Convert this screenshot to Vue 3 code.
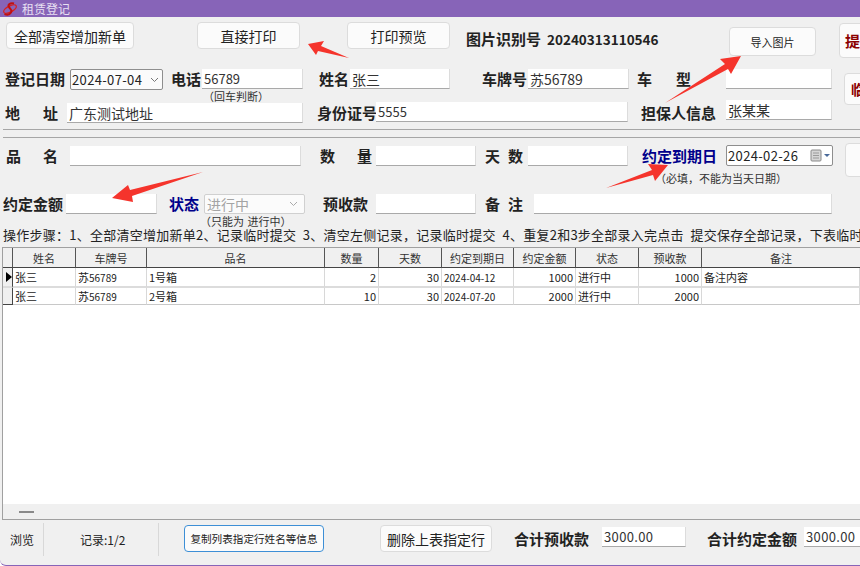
<template>
  <div class="win">
    <div class="title-bar">
      <svg class="logo" width="16" height="14" viewBox="0 0 16 14">
        <ellipse cx="8" cy="7" rx="7" ry="3" transform="rotate(-28 8 7)" fill="none" stroke="#d8201f" stroke-width="1.3" />
        <path d="M12 1.5C8 .5 5.500 2.500 7 5s3.500 3 2 5.500S5 13 2.500 12" fill="none" stroke="#c01010" stroke-width="2" />
      </svg>
      <span>租赁登记</span>
    </div>

    <div class="toolbar">
      <button class="btn btn-new">全部清空增加新单</button>
      <button class="btn btn-print">直接打印</button>
      <button class="btn btn-preview">打印预览</button>
      <span class="lb pic-lb">图片识别号</span>
      <span class="pic-no">20240313110546</span>
      <button class="btn btn-import">导入图片</button>
      <button class="btn btn-submit">提</button>
    </div>

    <div class="row row-a">
      <span class="lb">登记日期</span>
      <div class="combo">
        <span class="digits">2024-07-04</span>
        <svg width="9" height="6" viewBox="0 0 9 6"><path d="M1 1l3.500 3.500L8 1" fill="none" stroke="#777" /></svg>
      </div>
      <i></i>
      <span class="lb">电话</span>
      <input class="ipt small" value="56789" />
      <i></i>
      <span class="lb">姓名</span>
      <input class="ipt" value="张三" />
      <i></i>
      <span class="lb">车牌号</span>
      <input class="ipt" value="苏56789" />
      <i></i>
      <span class="lb spread sp-car">车 型</span>
      <input class="ipt" />
      <i></i>
      <button class="btn btn-temp">临</button>
    </div>
    <div class="note note-a">（回车判断）</div>

    <div class="row row-b">
      <span class="lb spread sp-addr">地 址</span>
      <input class="ipt" value="广东测试地址" />
      <i></i>
      <span class="lb">身份证号</span>
      <input class="ipt small up1" value="5555" />
      <i></i>
      <span class="lb">担保人信息</span>
      <input class="ipt up3" value="张某某" />
    </div>

    <div class="rule rule-a"></div>
    <div class="rule rule-b"></div>

    <div class="row row-c">
      <span class="lb spread sp-name">品 名</span>
      <input class="ipt" />
      <i></i>
      <span class="lb spread sp-qty">数 量</span>
      <input class="ipt" />
      <i></i>
      <span class="lb spread sp-day">天 数</span>
      <input class="ipt" />
      <i></i>
      <span class="lb navy">约定到期日</span>
      <div class="combo date">
        <span class="digits">2024-02-26</span>
        <svg width="22" height="13" viewBox="0 0 22 13">
          <rect x="1" y="1" width="10" height="11" rx="1" fill="#d6d6d6" stroke="#8a8a8a" />
          <path d="M3 4h6M3 6.500h6M3 9h6" stroke="#9a9a9a" />
          <path d="M14 5h6l-3 3z" fill="#4a6a9a" />
        </svg>
      </div>
      <i></i>
      <button class="btn btn-side"></button>
    </div>
    <div class="note note-c">（必填，不能为当天日期）</div>

    <div class="row row-d">
      <span class="lb">约定金额</span>
      <input class="ipt" />
      <i></i>
      <span class="lb navy">状态</span>
      <div class="combo off">
        <span>进行中</span>
        <svg width="9" height="6" viewBox="0 0 9 6"><path d="M1 1l3.500 3.500L8 1" fill="none" stroke="#aaa" /></svg>
      </div>
      <i></i>
      <span class="lb">预收款</span>
      <input class="ipt" />
      <i></i>
      <span class="lb spread sp-day">备 注</span>
      <input class="ipt" />
    </div>
    <div class="note note-d">（只能为 进行中）</div>

    <div class="steps">操作步骤：1、全部清空增加新单2、记录临时提交 3、清空左侧记录，记录临时提交 4、重复2和3步全部录入完点击 提交保存全部记录，下表临时</div>

    <div class="grid-box">
      <div class="grid-body">
        <table>
          <colgroup>
            <col v-for="w in colWidths" :key="w.id" :width="w.px" />
          </colgroup>
          <thead>
            <tr>
              <th></th>
              <th v-for="h in heads" :key="h">{{ h }}</th>
            </tr>
          </thead>
          <tbody>
            <tr v-for="(r, i) in records" :key="i">
              <td class="mark">
                <svg v-if="i === 0" width="6" height="10" viewBox="0 0 6 10"><path d="M0 0l6 5-6 5z" fill="#000" /></svg>
              </td>
              <td>{{ r.name }}</td>
              <td>苏<span class="num">{{ r.plate }}</span></td>
              <td>{{ r.goods }}</td>
              <td class="right">{{ r.qty }}</td>
              <td class="right">{{ r.days }}</td>
              <td><span class="num">{{ r.due }}</span></td>
              <td class="right">{{ r.amount }}</td>
              <td>进行中</td>
              <td class="right">{{ r.advance }}</td>
              <td>{{ r.memo }}</td>
            </tr>
          </tbody>
        </table>
      </div>
      <div class="hscroll"><span></span></div>
    </div>

    <div class="status">
      <div class="cell cell-browse">浏览</div>
      <div class="cell cell-count">记录:1/2</div>
      <button class="btn btn-copy">复制列表指定行姓名等信息</button>
      <button class="btn btn-del">删除上表指定行</button>
      <span class="lb sum-a">合计预收款</span>
      <input class="ipt sum digits" value="3000.00" />
      <span class="lb sum-b">合计约定金额</span>
      <input class="ipt sum digits" value="3000.00" />
    </div>

    <svg class="arrows" width="860" height="566" viewBox="0 0 860 566">
      <polygon points="308,44 324,41 321,46 349,58 318,51 316,55" />
      <polygon points="741,56 720,59 725,64 665,103 728,69 731,74" />
      <polygon points="112,198 128,185 130,190 203,172 132,196 133,202" />
      <polygon points="668,165 648,164 652,170 606,188 653,175 655,181" />
    </svg>
  </div>
</template>

<script setup>
const heads = ['姓名', '车牌号', '品名', '数量', '天数', '约定到期日', '约定金额', '状态', '预收款', '备注']

const colWidths = [10, 63, 71, 178, 54, 63, 72, 62, 63, 63, 158].map((px, id) => ({ id, px }))

const records = [
  { name: '张三', plate: '56789', goods: '1号箱', qty: 2, days: 30, due: '2024-04-12', amount: 1000, advance: 1000, memo: '备注内容' },
  { name: '张三', plate: '56789', goods: '2号箱', qty: 10, days: 30, due: '2024-07-20', amount: 2000, advance: 2000, memo: '' }
]
</script>

<style>
html,
body {
  margin: 0;
  background: #fff;
}
</style>

<style scoped>
.win {
  position: relative;
  display: flex;
  flex-direction: column;
  width: 860px;
  height: 566px;
  box-sizing: border-box;
  overflow: hidden;
  background: #f0f0f0;
  border-bottom: 1px solid #8764b8;
  border-bottom-left-radius: 6px;
  font-family: "Noto Sans CJK SC", "Liberation Sans", sans-serif;
  font-size: 14px;
  color: #222;
}

.title-bar {
  display: flex;
  align-items: center;
  flex: none;
  gap: 4px;
  height: 17px;
  padding-left: 2px;
  background: #8764b8;
  color: #e8e0f2;
  font-size: 12px;
}

.btn {
  flex: none;
  box-sizing: border-box;
  padding: 0;
  background: #fbfbfb;
  border: 1px solid #dcdcdc;
  border-radius: 4px;
  font-family: inherit;
  font-size: 14px;
  color: #222;
  white-space: nowrap;
}

.toolbar {
  display: flex;
  align-items: flex-start;
  flex: none;
  height: 47px;
  margin-top: 5px;
  padding-left: 6px;
}

.toolbar .btn {
  height: 27px;
}

.btn-new {
  width: 128px;
}

.btn-print {
  width: 103px;
  margin-left: 63px;
}

.btn-preview {
  width: 103px;
  margin-left: 47px;
}

.toolbar .pic-lb {
  flex: none;
  width: 81px;
  margin-left: 16px;
  line-height: 34px;
}

.pic-no {
  flex: none;
  width: 111px;
  font-weight: 700;
  font-size: 13.500px;
  line-height: 34px;
}

.toolbar .btn-import {
  width: 87px;
  height: 29px;
  margin-left: 71px;
  margin-top: 5px;
  font-size: 11px;
}

.toolbar .btn-submit {
  width: 50px;
  height: 35px;
  margin-left: 23px;
  margin-top: 1px;
  padding-left: 5px;
  text-align: left;
  font-size: 15px;
  font-weight: 700;
  color: #8b0000;
}

.row {
  display: grid;
  flex: none;
  align-items: start;
  grid-template-rows: 20px;
  height: 20px;
}

.row-a {
  grid-template-columns: 65px 93px 8px 31px 101px 16px 31px 100px 32px 46px 101px 8px 89px 106px 12px 40px;
  grid-template-rows: 21px;
  height: 21px;
  padding-left: 5px;
}

.row-b {
  grid-template-columns: 62px 236px 14px 59px 252px 13px 85px 106px;
  padding-left: 5px;
}

.row-c {
  grid-template-columns: 64px 231px 19px 56px 100px 9px 43px 100px 14px 84px 107px 12px 40px;
  margin-top: 8px;
  padding-left: 6px;
}

.row-d {
  grid-template-columns: 63px 91px 12px 35px 101px 18px 53px 100px 9px 49px 298px;
  padding-left: 3px;
}

.lb {
  font-weight: 700;
  font-size: 15px;
  line-height: 20px;
  white-space: nowrap;
}

.navy {
  color: #00008b;
}

.spread {
  text-align: justify;
  text-align-last: justify;
}

.sp-addr {
  width: 53px;
}

.sp-car {
  width: 54px;
}

.sp-name {
  width: 52px;
}

.sp-qty {
  width: 52px;
}

.sp-day {
  width: 38px;
}

.ipt {
  box-sizing: border-box;
  width: 100%;
  height: 20px;
  padding: 0 2px;
  background: #fff;
  border: none;
  border-bottom: 1px solid #a9a9a9;
  border-right: 1px solid #dcdcdc;
  border-radius: 0;
  outline: none;
  font-family: inherit;
  font-size: 14px;
  color: #333;
}

.small {
  font-size: 13px;
}

.up1 {
  margin-top: -1px;
}

.up3 {
  margin-top: -3px;
}

.digits {
  font-size: 13px;
  letter-spacing: 0.35px;
}

.combo {
  display: flex;
  align-items: center;
  justify-content: space-between;
  box-sizing: border-box;
  height: 21px;
  padding: 0 3px 0 1px;
  background: #fbfbfb;
  border: 1px solid #8e8e8e;
  border-radius: 2px;
  color: #222;
}

.date {
  margin-top: -1px;
  background: #fff;
  padding-right: 0;
}

.off {
  height: 20px;
  padding-left: 2px;
  padding-right: 6px;
  border-color: #d0d0d0;
  color: #a4a4a4;
}

.btn-temp {
  width: 40px;
  height: 32px;
  margin-top: 4px;
  padding-left: 6px;
  text-align: left;
  font-weight: 700;
  color: #8b0000;
}

.btn-side {
  width: 40px;
  height: 34px;
  margin-top: -3px;
}

.note {
  flex: none;
  box-sizing: border-box;
  font-size: 11px;
  line-height: 13px;
  color: #333;
  white-space: nowrap;
}

.note-a {
  height: 13px;
  padding-left: 203px;
}

.note-c {
  height: 28px;
  padding-top: 6px;
  padding-left: 655px;
}

.note-d {
  height: 14px;
  padding-top: 1px;
  padding-left: 200px;
  word-spacing: 1px;
}

.rule {
  flex: none;
  height: 1px;
  margin-left: 3px;
  background: #a6a6a6;
}

.rule-a {
  margin-top: 6px;
}

.rule-b {
  margin-top: 7px;
}

.steps {
  flex: none;
  height: 13px;
  padding-left: 3px;
  font-size: 13px;
  line-height: 13px;
  white-space: pre;
  word-spacing: 3.5px;
  letter-spacing: 0.25px;
  text-spacing-trim: space-all;
}

.grid-box {
  display: flex;
  flex: 1;
  flex-direction: column;
  min-height: 0;
  margin: 6px 0 0 2px;
  border: 1px solid #a0a0a0;
  border-right: none;
}

.grid-body {
  flex: 1;
  min-height: 0;
  overflow: hidden;
  background: #fff;
}

table {
  width: 857px;
  table-layout: fixed;
  border-collapse: separate;
  border-spacing: 0;
  font-size: 11px;
}

th {
  box-sizing: border-box;
  height: 20px;
  padding: 0;
  background: #f0f0f0;
  border-right: 1px solid #555;
  border-bottom: 1px solid #444;
  font-weight: 400;
  color: #333;
}

th:last-child {
  border-right: none;
}

td {
  box-sizing: border-box;
  height: 20px;
  padding: 0 2px;
  border-right: 1px solid #d8d8d8;
  border-bottom: 2px solid #dcdcdc;
  white-space: nowrap;
  overflow: hidden;
  color: #222;
}

tr:last-child td {
  height: 17px;
  border-bottom-width: 1px;
  border-bottom-color: #c8c8c8;
}

td.right {
  text-align: right;
}

td.mark {
  padding: 0 0 0 3px;
  background: #f0f0f0;
  border-right: 1px solid #444;
  line-height: 0;
}

tr:last-child td.mark {
  border-bottom-color: #444;
}

.num {
  font-size: 10px;
}

.hscroll {
  display: flex;
  align-items: center;
  flex: none;
  height: 15px;
  padding-left: 16px;
  background: #f0f0f0;
}

.hscroll span {
  width: 15px;
  height: 2px;
  background: #8a8a8a;
}

.status {
  display: flex;
  align-items: center;
  flex: none;
  height: 35px;
  margin-top: 1px;
  margin-bottom: 9px;
}

.cell {
  display: flex;
  flex: none;
  align-items: center;
  align-self: stretch;
  box-sizing: border-box;
  margin-top: 2px;
  border-right: 1px solid #d8d8d8;
  font-size: 12px;
}

.cell-browse {
  width: 44px;
  padding-left: 10px;
}

.cell-count {
  width: 115px;
  padding-left: 36px;
}

.status .btn {
  height: 27px;
}

.btn-copy {
  width: 140px;
  margin-left: 25px;
  border: 1px solid #3d8fd6;
  font-size: 10.600px;
}

.btn-del {
  width: 112px;
  margin-left: 56px;
}

.sum-a {
  flex: none;
  width: 88px;
  margin-left: 22px;
}

.sum-b {
  flex: none;
  width: 97px;
  margin-left: 21px;
}

.sum {
  flex: none;
  width: 84px;
  margin-top: -3px;
  color: #333;
}

.arrows {
  position: absolute;
  left: 0;
  top: 0;
  pointer-events: none;
  fill: #f5342c;
}
</style>
